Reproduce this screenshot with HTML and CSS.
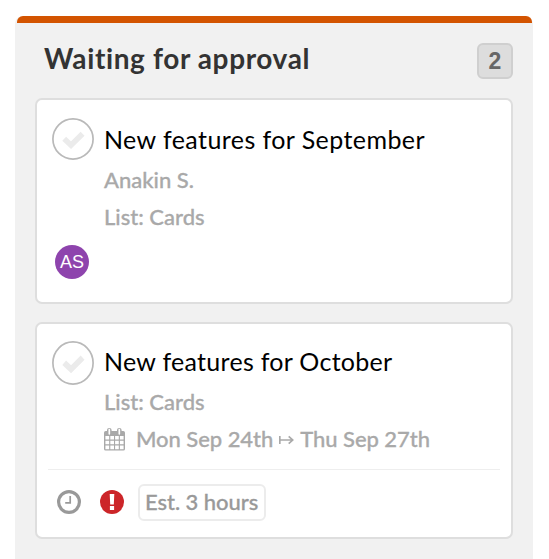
FILE: index.html
```
<!DOCTYPE html>
<html lang="en">
<head>
<meta charset="utf-8">
<title>Waiting for approval</title>
<link rel="stylesheet" href="styles.css">
</head>
<body>
<section class="column">
  <header class="column-header">
    <h2 class="column-title">Waiting for approval</h2>
    <span class="count">2</span>
  </header>
  <article class="card card-first">
    <div class="card-main">
      <svg class="check" viewBox="0 0 42 42"><circle cx="21" cy="21" r="20.1" fill="#fff" stroke="#b9b9b9" stroke-width="1.7"/><path d="M12.2 20.8L19 27.2L30.6 15.8" fill="none" stroke="#ebebeb" stroke-width="5.6"/></svg>
      <div class="details">
        <h3 class="card-title september">New features for September</h3>
        <p class="meta name">Anakin S.</p>
        <p class="meta list">List: Cards</p>
      </div>
    </div>
    <span class="avatar">AS</span>
  </article>
  <article class="card card-second">
    <div class="card-main">
      <svg class="check" viewBox="0 0 42 42" preserveAspectRatio="none"><circle cx="21" cy="21" r="20.1" fill="#fff" stroke="#b9b9b9" stroke-width="1.7"/><path d="M12.2 20.8L19 27L30.6 15.8" fill="none" stroke="#ebebeb" stroke-width="5.6"/></svg>
      <div class="details">
        <h3 class="card-title october">New features for October</h3>
        <p class="meta list">List: Cards</p>
        <p class="meta dates">
          <svg class="calendar" viewBox="0 0 21 23"><path fill="#a9a9a9" fill-rule="evenodd" d="M1.7 3H3V2Q3 0 5.3 0T7.6 2V3H13V2Q13 0 15.3 0T17.6 2V3H19.3Q21 3 21 4.7V21Q21 22.6 19.3 22.6H1.7Q0 22.6 0 21V4.7Q0 3 1.7 3ZM1.4 8V11.6H5.2V8ZM6.3 8V11.6H10V8ZM11.1 8V11.6H14.8V8ZM15.9 8V11.6H19.6V8ZM1.4 12.7V16.3H5.2V12.7ZM6.3 12.7V16.3H10V12.7ZM11.1 12.7V16.3H14.8V12.7ZM15.9 12.7V16.3H19.6V12.7ZM1.4 17.4V21.2H5.2V17.4ZM6.3 17.4V21.2H10V17.4ZM11.1 17.4V21.2H14.8V17.4ZM15.9 17.4V21.2H19.6V17.4Z"/><path d="M5.3 1.5V5.8M15.3 1.5V5.8" stroke="#fff" stroke-width="1.7" stroke-linecap="round"/></svg>
          <span class="from">Mon Sep 24th</span>
          <svg class="arrow" viewBox="0 0 15 10"><path d="M.8 1V9M.8 5H13.6M9.7 1.3L13.7 5L9.7 8.7" fill="none" stroke="#a9a9a9" stroke-width="1.7"/></svg>
          <span class="to">Thu Sep 27th</span>
        </p>
      </div>
    </div>
    <footer class="card-footer">
      <svg class="status" viewBox="0 0 24 24"><circle cx="12" cy="12" r="10.4" fill="none" stroke="#999" stroke-width="3.2"/><path d="M13.2 6V12.9H8.2" fill="none" stroke="#999" stroke-width="1.7"/></svg>
      <svg class="status alert" viewBox="0 0 24 24"><circle cx="12" cy="12" r="12" fill="#cc2529"/><path d="M9.7 4H14.3L13.8 14.4H10.2ZM9.9 16H14.1V20H9.9Z" fill="#fff"/></svg>
      <span class="estimate">Est. 3 hours</span>
    </footer>
  </article>
</section>
</body>
</html>
```
FILE: styles.css
```
* { box-sizing: border-box; }
body {
  margin: 0;
  padding: 16px 16px 0 15px;
  background: #fff;
  font-family: Lato, "Liberation Sans", sans-serif;
  overflow: hidden;
}
h2, h3, p { margin: 0; white-space: nowrap; }
svg { display: block; flex: none; }
.column {
  height: 543px;
  padding: 0 20px 0 21px;
  background: #f1f1f1;
  border-radius: 8px 8px 0 0;
}
.column::before {
  content: "";
  display: block;
  height: 7px;
  margin: 0 -19px;
  background: #d35400;
  border-radius: 6px 6px 0 0;
}
.column-header {
  display: flex;
  justify-content: space-between;
  height: 75px;
  padding: 20px 0 0 8px;
}
.column-title {
  margin-top: -1px;
  color: #333;
  font-size: 28px;
  line-height: 32px;
  font-weight: 700;
  letter-spacing: 0.62px;
}
.count {
  width: 36px;
  height: 36px;
  border: 2px solid #cfcfcf;
  border-radius: 6px;
  background: #ddd;
  color: #666;
  font: 700 23px/32px "Liberation Sans", sans-serif;
  text-align: center;
}
.card {
  width: 478px;
  margin-left: -1px;
  border: 2px solid #dedede;
  border-radius: 7px;
  background: #fff;
}
.card-first { height: 206px; margin-bottom: 18px; padding: 18px 15px; }
.card-second { height: 217px; padding: 17px 11px 0; }
.card-second .card-main { padding-left: 4px; }
.card-main { display: flex; gap: 10px; }
.check { width: 42px; height: 42px; }
.card-second .check { height: 44px; }
.details { padding-top: 3px; }
.card-second .details { padding-top: 2px; }
.card-title {
  height: 37px;
  color: #000;
  font-size: 25px;
  line-height: 36px;
  font-weight: 400;
}
.september { letter-spacing: 0.42px; }
.october { letter-spacing: 0.28px; }
.meta {
  height: 37px;
  color: #a9a9a9;
  font-size: 22px;
  line-height: 44px;
  font-weight: 500;
  -webkit-text-stroke: 0.3px #a9a9a9;
}
.avatar {
  display: block;
  width: 34px;
  height: 34px;
  margin: 13px 0 0 3px;
  border-radius: 50%;
  background: #8e44ad;
  color: #fff;
  font: 18px/34px "Liberation Sans", sans-serif;
  text-align: center;
}
.dates { display: flex; align-items: center; height: 44px; line-height: 42px; }
.calendar { width: 21px; height: 23px; margin-right: 11px; }
.arrow { width: 15px; height: 10px; margin: 1px 6px 0 6px; }
.from, .to { letter-spacing: -0.05px; }
.card-footer {
  display: flex;
  align-items: center;
  height: 66px;
  margin-top: 8px;
  padding: 0 0 1px 9px;
  border-top: 1px solid #eee;
}
.status { width: 24px; height: 24px; }
.alert { margin-left: 19px; }
.estimate {
  width: 128px;
  height: 37px;
  margin-left: 14px;
  padding-left: 5px;
  border: 2px solid #ececec;
  border-radius: 6px;
  color: #999;
  font-size: 22px;
  line-height: 32px;
  font-weight: 500;
  letter-spacing: -0.05px;
  white-space: nowrap;
  -webkit-text-stroke: 0.3px #999;
}
```
